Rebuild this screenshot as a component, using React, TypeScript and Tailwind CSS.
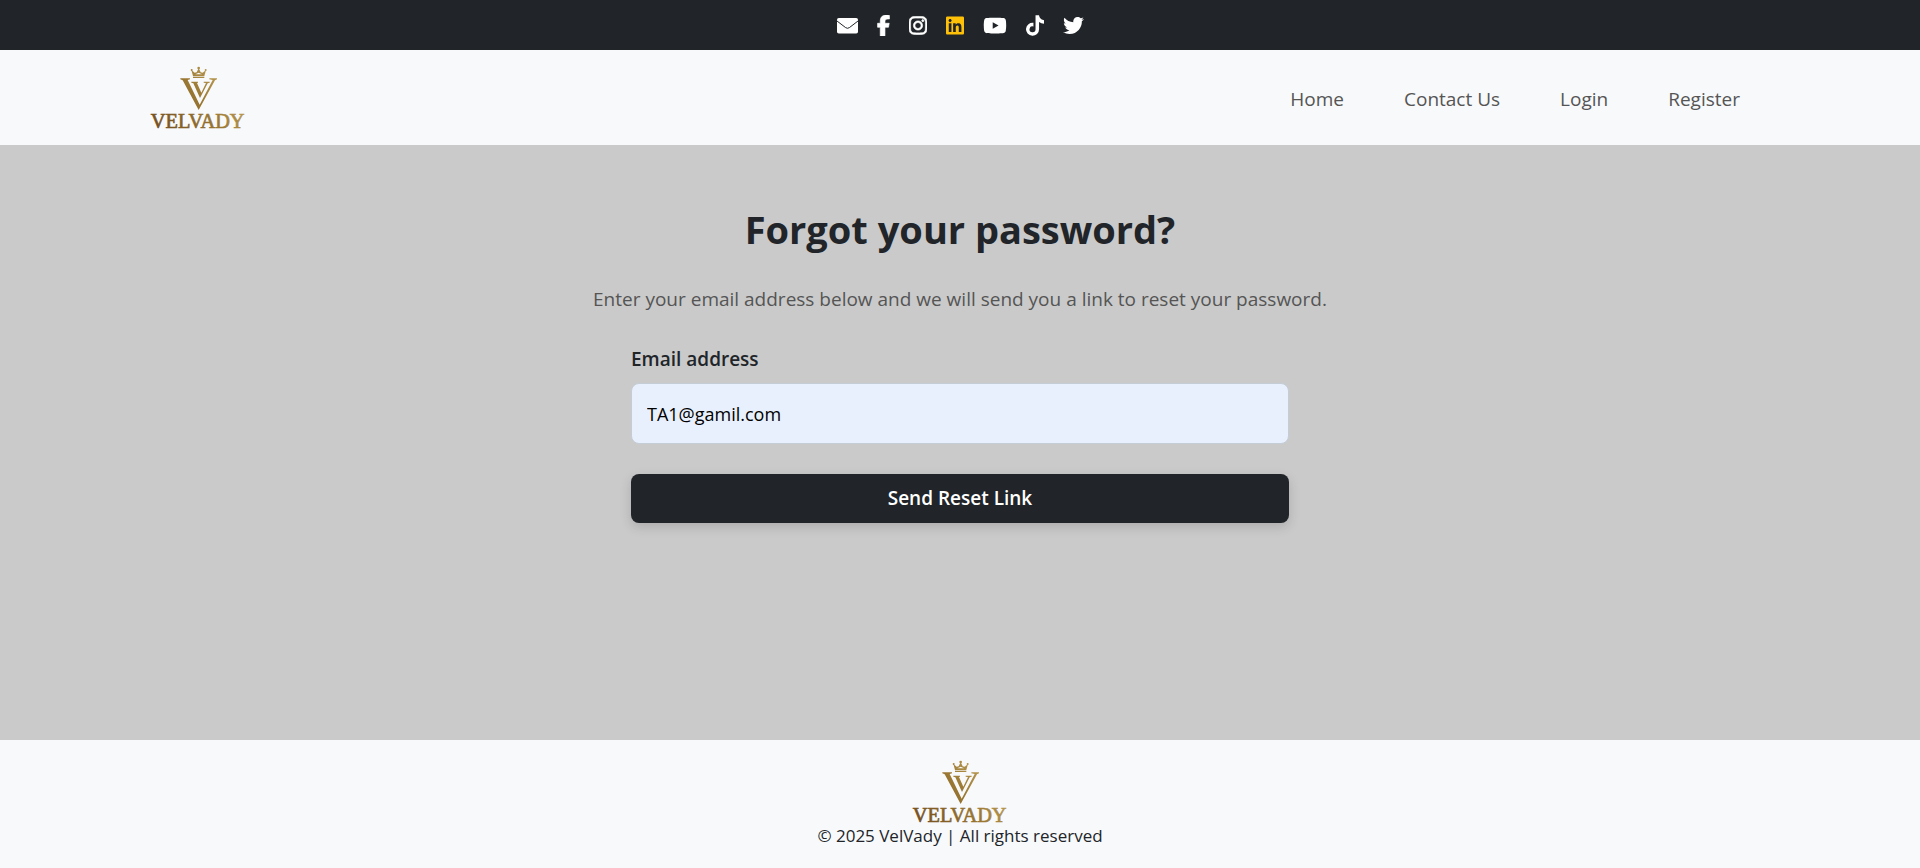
import { useId } from "react";
import {
  FaFacebookF,
  FaInstagram,
  FaLinkedin,
  FaTiktok,
  FaTwitter,
  FaYoutube,
} from "react-icons/fa6";

function Envelope({ className }: { className: string }) {
  return (
    <svg viewBox="0 0 21 21" className={className} aria-hidden="true">
      <rect x="0" y="3" width="21" height="15.5" rx="1.8" fill="currentColor" />
      <path d="M0 6 L8.6 12.6 Q10.5 14 12.4 12.6 L21 6" fill="none" stroke="#212529" strokeWidth="1" />
    </svg>
  );
}

const socials = [
  { label: "Email", Icon: Envelope, style: "w-[21px] text-white" },
  { label: "Facebook", Icon: FaFacebookF, style: "w-[13px] stroke-current stroke-[16] text-white" },
  { label: "Instagram", Icon: FaInstagram, style: "w-[18px] stroke-current stroke-[16] text-white" },
  { label: "LinkedIn", Icon: FaLinkedin, style: "w-[18px] text-[#ffc107]" },
  { label: "YouTube", Icon: FaYoutube, style: "w-[24px] text-white" },
  { label: "TikTok", Icon: FaTiktok, style: "w-[18px] text-white" },
  { label: "Twitter", Icon: FaTwitter, style: "w-[21px] text-white" },
];

const links = ["Home", "Contact Us", "Login", "Register"];

function Logo() {
  const id = useId();
  const fill = `url(#${id})`;
  return (
    <svg viewBox="0 0 288 192" className="h-16 w-24 overflow-visible" role="img" aria-label="Velvady">
      <defs>
        <linearGradient id={id} gradientUnits="userSpaceOnUse" x1="20" y1="180" x2="230" y2="20">
          <stop offset="0" stopColor="#75501f" />
          <stop offset="0.35" stopColor="#8a672a" />
          <stop offset="0.6" stopColor="#9c7a34" />
          <stop offset="1" stopColor="#c2a45c" />
        </linearGradient>
      </defs>
      <g fill={fill}>
        <circle cx="146" cy="6" r="4" />
        <circle cx="125" cy="12" r="3" />
        <circle cx="167" cy="12" r="3" />
        <path d="M124 12 L134 20 L140 19 L146 6 L152 19 L158 20 L168 12 L163 30 H129 Z M136 25 H156 L146 20 Z" fillRule="evenodd" />
        <path d="M129 32 H163 V36 H129 Z" />
        <path d="M91 37 H120 V40 L113 42 L149 116 L188 42 L178 40 V37 H201 V40 L195 43 L146 132 L98 43 L91 40 Z" />
        <path d="M124 47 H144 V50 L141 51 L154 80 L168 51 L161 50 V47 H179 V50 L173 52 L150 96 L130 52 L124 50 Z" />
      </g>
      <text
        x="143"
        y="186"
        textAnchor="middle"
        fontSize="61"
        fill={fill}
        stroke={fill}
        strokeWidth="2"
        className="font-['Liberation_Serif',serif]"
      >
        VELVADY
      </text>
    </svg>
  );
}

export default function App() {
  return (
    <div className="flex min-h-screen flex-col bg-[#cacaca] font-['Open_Sans',sans-serif] text-[#212529]">
      <div className="flex h-[50px] items-center justify-center gap-[19px] bg-[#212529]">
        {socials.map(({ label, Icon, style }) => (
          <a key={label} href="#" aria-label={label}>
            <Icon className={`h-[21px] ${style}`} />
          </a>
        ))}
      </div>

      <header className="flex h-[95px] items-center justify-between bg-[#f8f9fb] pr-[180px] pl-[150px]">
        <a href="#">
          <Logo />
        </a>
        <nav className="flex gap-[60px] pt-1 text-[19px] text-[#555555]">
          {links.map((link) => (
            <a key={link} href="#">
              {link}
            </a>
          ))}
        </nav>
      </header>

      <main className="flex grow flex-col items-center px-4 pt-[58px]">
        <h1 className="text-[38px] leading-[52px] font-bold">Forgot your password?</h1>
        <p className="mt-[30px] text-[19px] leading-7 text-[#555555]">
          Enter your email address below and we will send you a link to reset your password.
        </p>
        <form className="mt-8 flex w-full max-w-[658px] flex-col" onSubmit={(e) => e.preventDefault()}>
          <label htmlFor="email" className="text-[19px] leading-7 font-semibold">
            Email address
          </label>
          <input
            id="email"
            type="email"
            defaultValue="TA1@gamil.com"
            className="mt-2.5 h-[61px] rounded-lg border border-[#c4ccd6] bg-[#e8f0fe] px-[15px] text-[18px] text-black outline-none"
          />
          <button
            type="submit"
            className="mt-[30px] h-[49px] rounded-lg bg-[#212529] text-[19px] font-semibold text-white shadow-[0_4px_12px_rgba(0,0,0,0.15)]"
          >
            Send Reset Link
          </button>
        </form>
      </main>

      <footer className="flex h-32 flex-col items-center bg-[#f8f9fb] pt-5">
        <Logo />
        <p className="text-[17px] leading-6">© 2025 VelVady | All rights reserved</p>
      </footer>
    </div>
  );
}
